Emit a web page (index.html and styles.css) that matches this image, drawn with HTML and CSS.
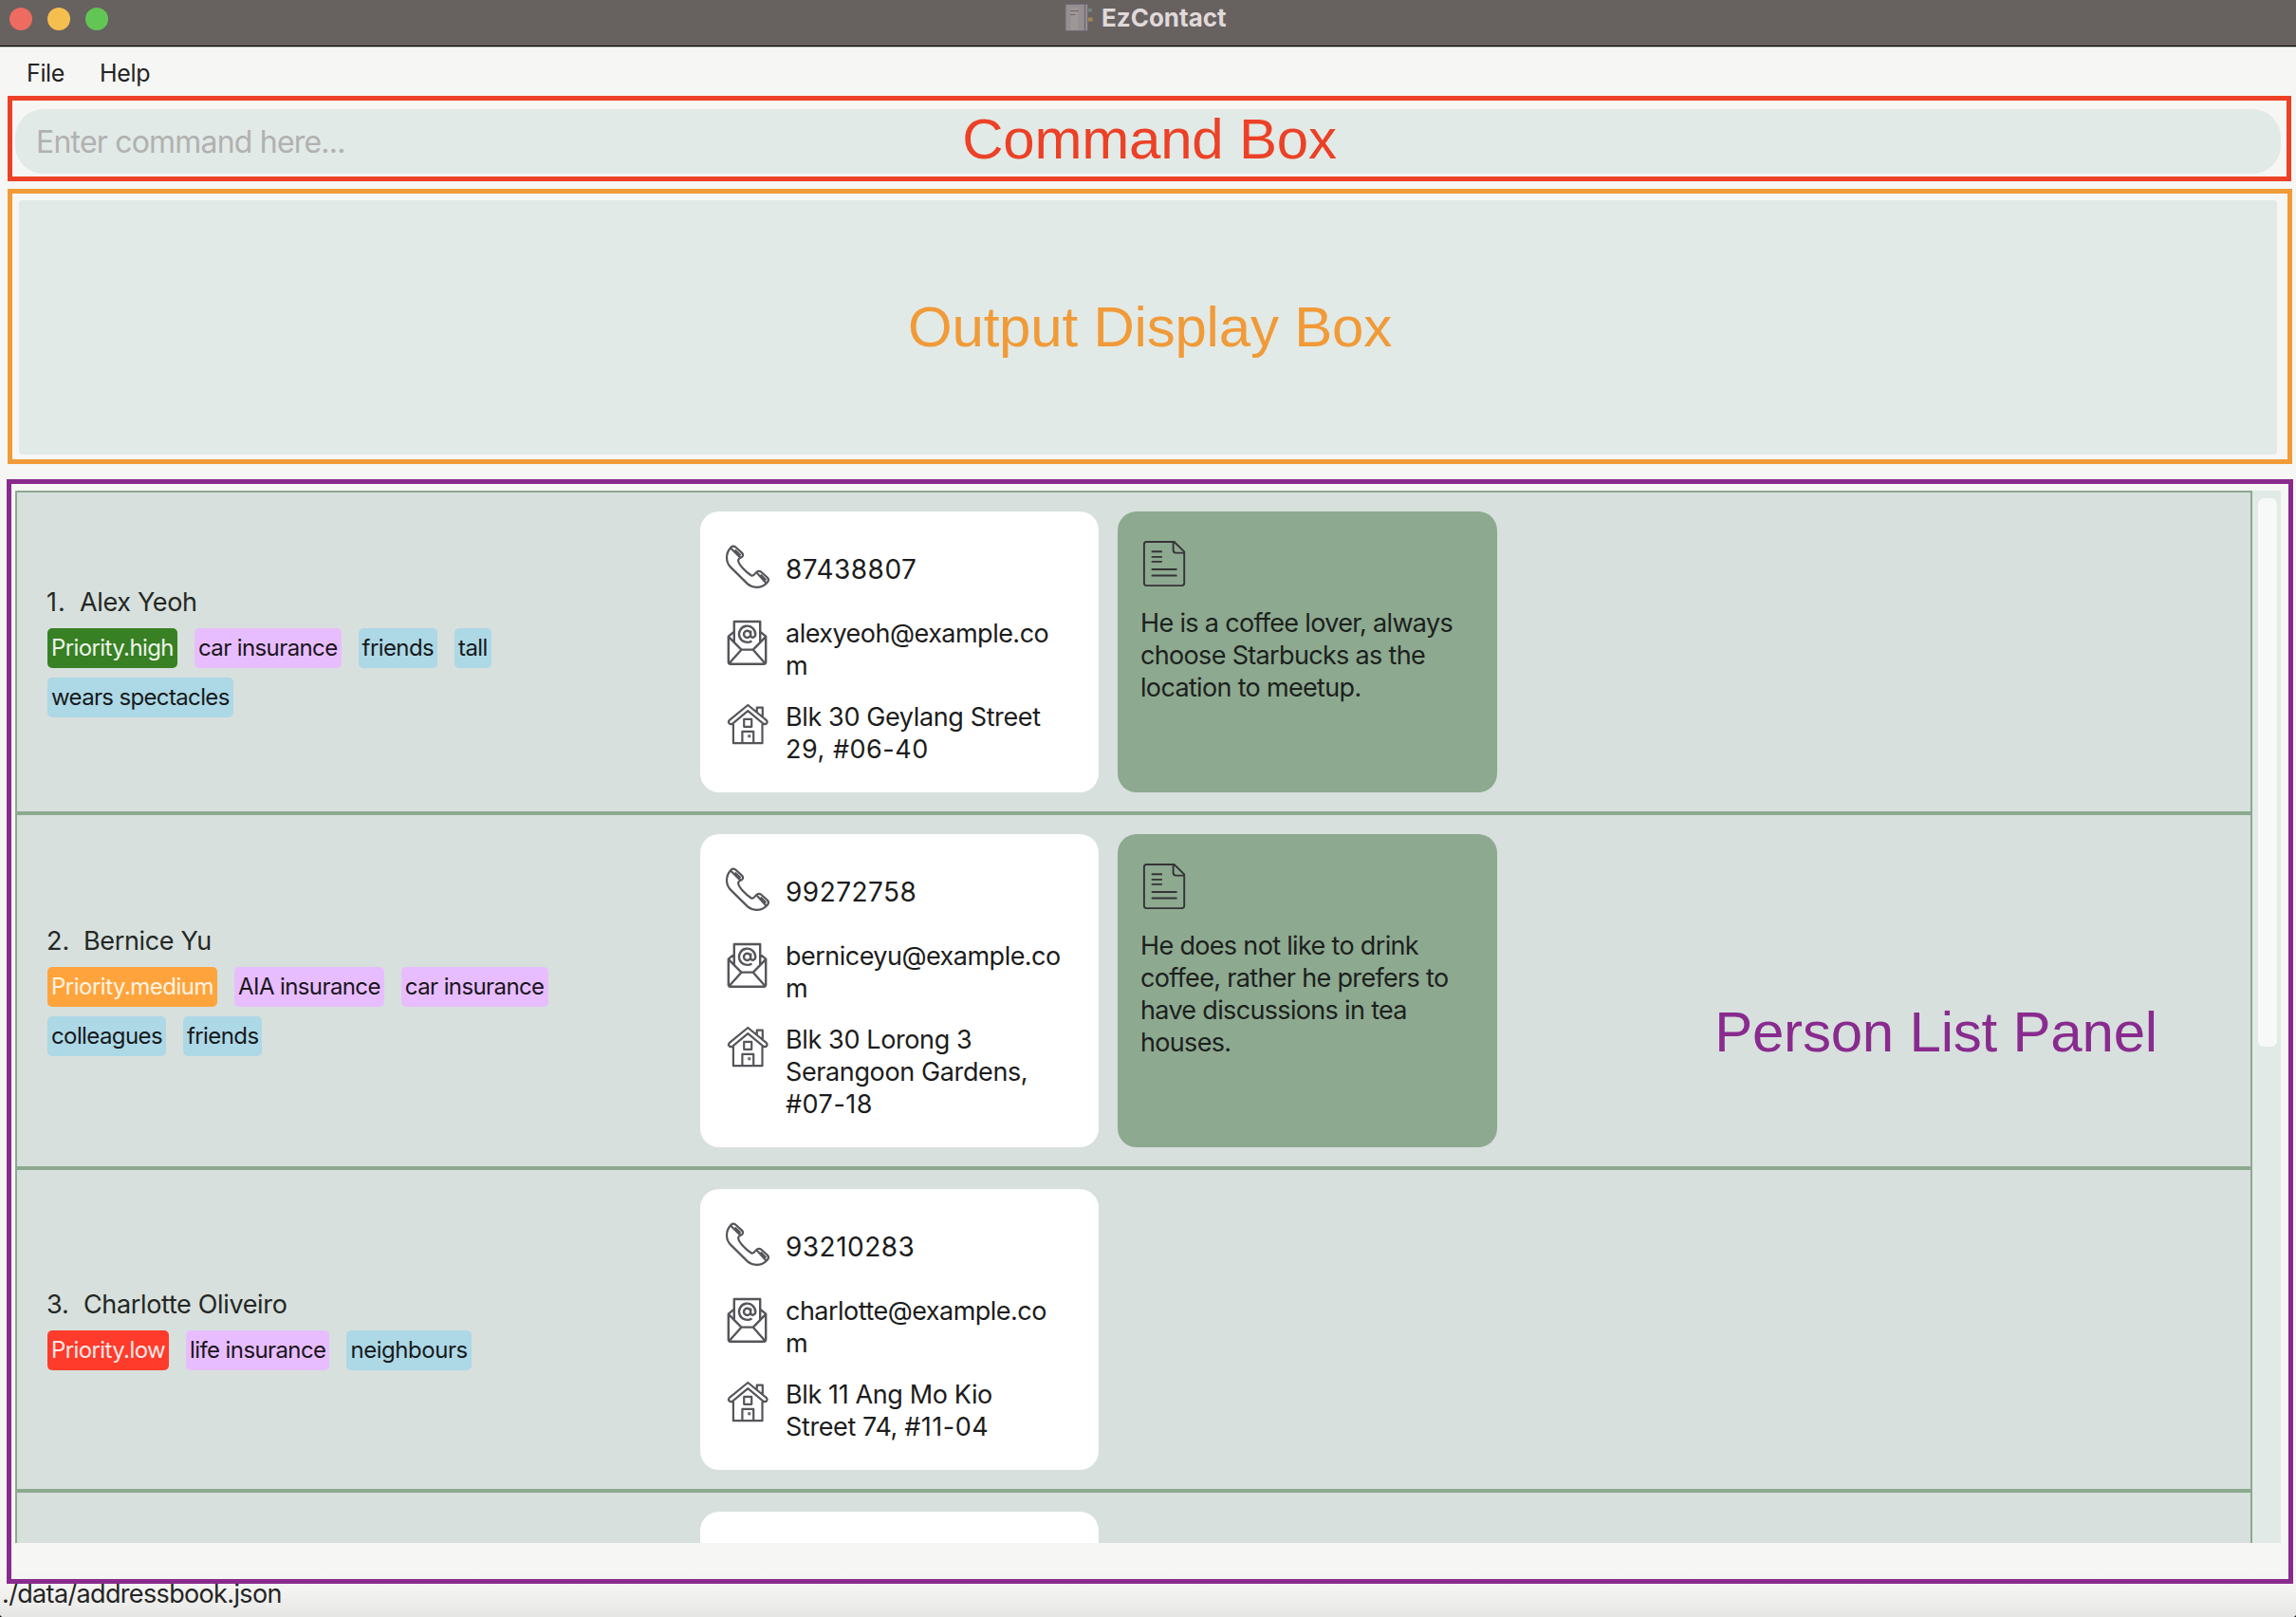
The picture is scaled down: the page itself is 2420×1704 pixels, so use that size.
FILE: index.html
```html
<!DOCTYPE html>
<html lang="en">
<head>
<meta charset="utf-8">
<title>EzContact</title>
<link rel="stylesheet" href="styles.css">
</head>
<body>
<svg class="sprite" aria-hidden="true">
  <symbol id="phone" viewBox="0 0 52 52">
    <path d="M8 6.3C9.2 4.6 11.3 4 13 5.3L20 11.6C21.6 13.2 21.2 15.2 19.8 16.2C17 17.2 15.8 18.6 16.2 20.2C16.8 24 23 31 29.6 35.2C31.5 36.3 33 35 34.3 33C35.6 31 38 30.2 40 31.5L47 37.7C48.3 39.2 48 41.5 46.5 43C43 46.8 39 48 35 47.9C31.5 47.6 28.5 46.6 26 44.4L8 26.6C5 23.6 4 20.5 4 16.5C4.1 12.3 5.6 9 8 6.3Z"/>
    <path d="M8 6.5L18.4 16.6M12.6 8.6L18.6 14.2M35.6 32.4L45.6 43.4M39.6 34.6L45.4 40.2"/>
  </symbol>
  <symbol id="mail" viewBox="0 0 52 52">
    <path d="M11.8 24.5V3H39.2V24.5M11.8 13.6L5.8 18.6V45.6Q5.8 47.8 8 47.8H43Q45.2 47.8 45.2 45.6V18.6L39.2 13.6M6 19.2L19.4 32.6H31.8L45 19.2M19.4 32.8L6.6 47M31.8 32.8L44.4 47"/>
    <path d="M30.4 23.4A8.6 8.6 0 1 1 34.2 16.6C34.2 19.8 30 20.8 29.2 18V12.6M29.2 16.4A3.6 3.6 0 1 1 22 16.4A3.6 3.6 0 1 1 29.2 16.4"/>
  </symbol>
  <symbol id="house" viewBox="0 0 52 52">
    <path d="M26.3 5L6.6 21.2Q5.4 22.6 6.4 24Q8 25.8 9.8 24.8L26.3 11.2L42.8 24.8Q44.8 25.8 46.2 24Q47.2 22.4 46 21.2ZM35.8 12.2V7.6H41.8V17.4M10.9 25V45.2H41.5V25M22.2 19.9H30.2V27.8H22.2ZM20.4 45V32.8H32.2V45"/>
    <circle cx="27.7" cy="37.7" r=".6"/>
  </symbol>
  <symbol id="note" viewBox="0 0 52 52">
    <path d="M35.6 3H6.4Q3.9 3 3.9 5.6V46.6Q3.9 49.1 6.4 49.1H43.6Q46.2 49.1 46.2 46.6V13.4ZM34.6 3.4V11.6Q34.6 14.6 37.4 14.6H46M11.7 13.3H22.9M11.7 18.9H22.9M11.7 23.9H22.9M11.7 32H38.5M11.7 38.5H38.5"/>
  </symbol>
</svg>

<div class="window">
  <header class="titlebar">
    <div class="lights"><i class="light red"></i><i class="light amber"></i><i class="light green"></i></div>
    <div class="title">
      <svg class="book" viewBox="0 0 32 32">
        <path d="M24 5h5v3.500h-5z" fill="#6f8a7c"/><path d="M24 14.500h5.500v4h-5.500z" fill="#a48a4c"/>
        <rect x="1" y=".5" width="23.500" height="28" rx="1" fill="#978e90" stroke="#716a78"/>
        <path d="M6.500 4.500h8v23h-8z" fill="#9d9795"/><path d="M21.500 1v27.500" stroke="#6b6472" stroke-width="1.200"/>
        <path d="M6 7.500h9M6 11.500h5" stroke="#6a646a" stroke-width="1.200"/>
      </svg>
      <span>EzContact</span>
    </div>
  </header>

  <nav class="menu"><span>File</span><span>Help</span></nav>
  <div class="command">Enter command here...</div>
  <div class="output"></div>

  <main class="panel">
    <div class="list">
      <article class="row">
        <section class="person">
          <h2 class="name"><span class="index">1.</span>Alex Yeoh</h2>
          <div class="tags">
            <span class="tag high">Priority.high</span><span class="tag plan">car insurance</span><span class="tag">friends</span><span class="tag">tall</span><span class="tag snug">wears spectacles</span>
          </div>
        </section>
        <section class="contact">
          <div class="entry phone"><svg class="icon"><use href="#phone"/></svg><p>87438807</p></div>
          <div class="entry mail"><svg class="icon"><use href="#mail"/></svg><p>alexyeoh@example.co<br>m</p></div>
          <div class="entry"><svg class="icon"><use href="#house"/></svg><p>Blk 30 Geylang Street<br><span class="digits">29, #06-40</span></p></div>
        </section>
        <section class="note">
          <svg class="icon"><use href="#note"/></svg>
          <p>He is a coffee lover, always<br>choose Starbucks as the<br>location to meetup.</p>
        </section>
      </article>

      <article class="row">
        <section class="person">
          <h2 class="name"><span class="index wide">2.</span>Bernice Yu</h2>
          <div class="tags">
            <span class="tag medium">Priority.medium</span><span class="tag plan">AIA insurance</span><span class="tag plan">car insurance</span><span class="tag">colleagues</span><span class="tag">friends</span>
          </div>
        </section>
        <section class="contact">
          <div class="entry phone"><svg class="icon"><use href="#phone"/></svg><p>99272758</p></div>
          <div class="entry mail"><svg class="icon"><use href="#mail"/></svg><p>berniceyu@example.co<br>m</p></div>
          <div class="entry"><svg class="icon"><use href="#house"/></svg><p>Blk 30 Lorong 3<br>Serangoon Gardens,<br><span class="digits">#07-18</span></p></div>
        </section>
        <section class="note">
          <svg class="icon"><use href="#note"/></svg>
          <p>He does not like to drink<br>coffee, rather he prefers to<br>have discussions in tea<br>houses.</p>
        </section>
      </article>

      <article class="row">
        <section class="person">
          <h2 class="name"><span class="index wide">3.</span>Charlotte Oliveiro</h2>
          <div class="tags">
            <span class="tag low">Priority.low</span><span class="tag plan">life insurance</span><span class="tag loose">neighbours</span>
          </div>
        </section>
        <section class="contact">
          <div class="entry phone"><svg class="icon"><use href="#phone"/></svg><p>93210283</p></div>
          <div class="entry mail"><svg class="icon"><use href="#mail"/></svg><p>charlotte@example.co<br>m</p></div>
          <div class="entry"><svg class="icon"><use href="#house"/></svg><p>Blk 11 Ang Mo Kio<br>Street 74, <span class="digits">#11-04</span></p></div>
        </section>
      </article>

      <article class="row">
        <section class="person"></section>
        <section class="contact"></section>
      </article>
    </div>
    <div class="scrollbar"><div class="thumb"></div></div>
  </main>

  <footer class="status">./data/addressbook.json</footer>

  <div class="callout command-callout">Command Box</div>
  <div class="callout output-callout">Output Display Box</div>
  <div class="callout list-callout"><span class="list-label">Person List Panel</span></div>
</div>
</body>
</html>
```
FILE: styles.css
```css
* { box-sizing: border-box; }

body {
  margin: 0;
  background: #151515;
  font-family: Inter, "Liberation Sans", sans-serif;
  color: #1c1c1c;
}

h2, p { margin: 0; font-weight: 400; }

.sprite { display: none; }

.window {
  position: relative;
  display: flex;
  flex-direction: column;
  width: 2420px;
  height: 1704px;
  overflow: hidden;
  border-radius: 0 0 4px 4px;
  background: #f6f6f4;
}

/* Title bar */
.titlebar {
  display: grid;
  grid-template-columns: 1fr 176px 1fr;
  flex: none;
  height: 50px;
  background: #676160;
  border-bottom: 1px solid #b6bab2;
  box-shadow: inset 0 -1px #000;
}
.lights { display: flex; gap: 16px; padding: 8px 10px; }
.light { width: 24px; height: 24px; border-radius: 50%; }
.red { background: #ed6b60; }
.amber { background: #f5bf4f; }
.green { background: #62c655; }
.title {
  display: flex;
  gap: 7px;
  padding-top: 4px;
  font-size: 26px;
  font-weight: 700;
  line-height: 30px;
  color: #e0d9d9;
}
.book { flex: none; width: 32px; height: 32px; }

/* Menu and text boxes */
.menu {
  display: flex;
  flex: none;
  gap: 37px;
  height: 65px;
  padding: 10px 28px;
  font-size: 25px;
  line-height: 34px;
  letter-spacing: -.35px;
  color: #242424;
}
.command {
  flex: none;
  height: 68px;
  margin: 0 16px;
  padding-left: 22px;
  border-radius: 30px;
  background: #e1eae6;
  font-size: 32px;
  line-height: 69px;
  letter-spacing: -.8px;
  color: #b1b1b1;
}
.output {
  flex: none;
  height: 268px;
  margin: 28px 20px 38px;
  border-radius: 4px;
  background: #e1eae6;
}

/* Person list */
.panel {
  display: flex;
  flex: none;
  height: 1109px;
  margin: 0 16px;
  overflow: hidden;
}
.list {
  flex: 1;
  border: solid #8da990;
  border-width: 2px 2px 0;
  background: #d7e0dd;
}
.row {
  display: grid;
  grid-template-columns: 640px 420px 400px;
  column-gap: 20px;
  padding: 20px 0 20px 32px;
  border-bottom: 4px solid #8da990;
}
.contact { margin-left: 28px; margin-right: -28px; min-height: 296px; }
.note { margin-left: 28px; margin-right: -28px; }

.person { align-self: center; padding-bottom: 1px; }
.name {
  margin-bottom: 11px;
  padding-top: 1px;
  font-size: 27px;
  line-height: 33px;
  letter-spacing: -.35px;
  color: #242824;
}
.index { display: inline-block; width: 35px; margin-left: -1px; letter-spacing: 1px; }
.index.wide { width: 39px; letter-spacing: 0; }
.tags { display: flex; flex-wrap: wrap; gap: 10px 18px; }
.tag {
  height: 42px;
  padding: 0 4px;
  border-radius: 5px;
  background: #add8e6;
  font-size: 24px;
  line-height: 42px;
  letter-spacing: -.6px;
  white-space: nowrap;
  color: #161a1c;
}
.plan { background: #e8bdff; color: #1a151c; }
.high { background: #378023; color: #eef5ec; }
.medium { background: #ffa43d; color: #fff4e4; letter-spacing: -.5px; }
.low { background: #ff3b2b; color: #ffe9e7; }
.snug { letter-spacing: -.65px; }
.loose { letter-spacing: -.45px; }

.contact {
  display: flex;
  flex-direction: column;
  gap: 20px;
  padding: 32px 0 29px 24px;
  border-radius: 20px;
  background: #fff;
}
.entry {
  display: flex;
  gap: 14px;
  font-size: 27px;
  line-height: 34px;
  letter-spacing: -.38px;
  white-space: nowrap;
}
.entry p { margin: 1px 0 -1px; }
.phone { height: 59px; font-size: 28px; letter-spacing: .47px; }
.phone p { padding-top: 11px; }
.mail { letter-spacing: -.52px; }
.mail .icon { margin-top: 2px; stroke-width: 2.400; }
.digits { letter-spacing: .5px; }

.icon {
  flex: none;
  width: 52px;
  height: 52px;
  fill: none;
  stroke: #55555a;
  stroke-width: 2.200;
  stroke-linejoin: round;
}
.note {
  display: flex;
  flex-direction: column;
  gap: 20px;
  padding: 29px 0 0 24px;
  border-radius: 20px;
  background: #8da990;
  font-size: 27px;
  line-height: 34px;
  letter-spacing: -.67px;
  white-space: nowrap;
  color: #1c211d;
}
.note .icon { stroke: #353336; stroke-width: 1.900; }

.scrollbar {
  flex: none;
  width: 30px;
  padding: 8px 4px 0 6px;
  background: #e1eae6;
}
.thumb { height: 578px; border-radius: 6px; background: #f6f9f8; }

/* Status bar */
.status {
  flex: 1;
  margin-top: 21px;
  padding: 16px 0 0 2px;
  background: linear-gradient(#f7f7f5, #f3f3f1 50%, #e6e6e5);
  font-size: 27px;
  line-height: 34px;
  letter-spacing: -.65px;
  color: #242424;
}

/* Annotation frames drawn over the window */
.callout {
  position: absolute;
  border: 5px solid;
  font: 60px "Liberation Sans", Arial, sans-serif;
  letter-spacing: -.2px;
  text-align: center;
}
.command-callout {
  top: 101px;
  left: 8px;
  width: 2407px;
  height: 90px;
  border-color: #ec4127;
  line-height: 82px;
  color: #ec4127;
}
.output-callout {
  top: 199px;
  left: 8px;
  width: 2408px;
  height: 290px;
  border-color: #f19a38;
  line-height: 282px;
  color: #f19a38;
}
.list-callout {
  display: flex;
  align-items: center;
  justify-content: flex-end;
  top: 505px;
  left: 7px;
  width: 2410px;
  height: 1164px;
  padding-right: 138px;
  border-color: #892b8e;
  color: #892b8e;
}
```
